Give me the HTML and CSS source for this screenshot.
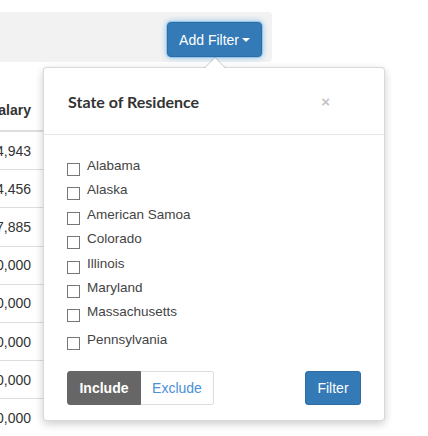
FILE: index.html
```html
<!DOCTYPE html>
<html>
<head>
<meta charset="utf-8">
<link rel="stylesheet" href="styles.css">
</head>
<body>
<div class="toolbar">
  <button class="add-btn">Add Filter<span class="caret"></span></button>
</div>
<div class="table">
  <div class="row head"><div class="cell">Salary</div></div>
  <div class="row"><div class="cell">$84,943</div></div>
  <div class="row"><div class="cell">$74,456</div></div>
  <div class="row"><div class="cell">$67,885</div></div>
  <div class="row"><div class="cell">$60,000</div></div>
  <div class="row"><div class="cell">$60,000</div></div>
  <div class="row"><div class="cell">$50,000</div></div>
  <div class="row"><div class="cell">$50,000</div></div>
  <div class="row"><div class="cell">$50,000</div></div>
</div>
<div class="popover">
  <div class="arrow"></div>
  <div class="pop-head">
    <span class="pop-title">State of Residence</span>
    <span class="close">×</span>
  </div>
  <div class="pop-body">
    <label class="item"><span class="box"></span><span>Alabama</span></label>
    <label class="item"><span class="box"></span><span>Alaska</span></label>
    <label class="item"><span class="box"></span><span>American Samoa</span></label>
    <label class="item"><span class="box"></span><span>Colorado</span></label>
    <label class="item"><span class="box"></span><span>Illinois</span></label>
    <label class="item"><span class="box"></span><span>Maryland</span></label>
    <label class="item"><span class="box"></span><span>Massachusetts</span></label>
    <label class="item last"><span class="box"></span><span>Pennsylvania</span></label>
  </div>
  <div class="pop-foot">
    <div class="seg">
      <button class="seg-btn active">Include</button>
      <button class="seg-btn">Exclude</button>
    </div>
    <button class="filter-btn">Filter</button>
  </div>
</div>
</body>
</html>
```
FILE: styles.css
```css
html, body {
  margin: 0;
  padding: 0;
}
body {
  position: relative;
  width: 428px;
  height: 436px;
  overflow: hidden;
  background: #fff;
  font-family: "Liberation Sans", Arial, sans-serif;
  color: #333;
}
button {
  font-family: "Liberation Sans", Arial, sans-serif;
  cursor: pointer;
}
.toolbar {
  margin-top: 12px;
  width: 272px;
  height: 50px;
  box-sizing: border-box;
  background: #f2f2f2;
  border-radius: 0 4px 4px 0;
  display: flex;
  justify-content: flex-end;
  align-items: flex-start;
  padding: 10px 10px 0 0;
}
.add-btn {
  height: 35px;
  box-sizing: border-box;
  padding: 0 11px;
  margin: 0;
  background: #337ab7;
  border: 1px solid #2e6da4;
  border-radius: 4px;
  color: #fff;
  font-size: 14px;
  display: flex;
  align-items: center;
  gap: 3px;
  box-shadow: 0 0 0 1px rgba(102, 175, 233, 0.45), 0 0 6px rgba(102, 175, 233, 0.9);
}
.caret {
  width: 0;
  height: 0;
  border-top: 4px solid #fff;
  border-left: 4px solid transparent;
  border-right: 4px solid transparent;
}
.table {
  margin-top: 28px;
  width: 200px;
  font-size: 14px;
}
.row {
  height: 37.2px;
  border-bottom: 1px solid #ddd;
  display: flex;
  align-items: center;
}
.row.head {
  height: 40px;
  border-bottom: 2px solid #ddd;
  font-weight: bold;
}
.cell {
  width: 31px;
  display: flex;
  justify-content: flex-end;
  white-space: nowrap;
}
.popover {
  position: absolute;
  left: 43px;
  top: 67px;
  width: 342px;
  box-sizing: border-box;
  background: #fff;
  border: 1px solid rgba(0, 0, 0, 0.15);
  border-radius: 4px;
  box-shadow: 0 3px 8px rgba(0, 0, 0, 0.2);
}
.arrow {
  position: absolute;
  top: -11px;
  left: 160px;
  width: 0;
  height: 0;
  border-left: 11px solid transparent;
  border-right: 11px solid transparent;
  border-bottom: 11px solid rgba(0, 0, 0, 0.2);
}
.arrow::after {
  content: "";
  position: absolute;
  left: -10px;
  top: 1px;
  width: 0;
  height: 0;
  border-left: 10px solid transparent;
  border-right: 10px solid transparent;
  border-bottom: 10px solid #fff;
}
.pop-head {
  height: 66px;
  border-bottom: 1px solid #e5e5e5;
  display: flex;
  align-items: center;
  justify-content: space-between;
  padding: 0 54px 0 24px;
}
.pop-title {
  font-family: Lato, "Liberation Sans", sans-serif;
  font-weight: 700;
  font-size: 16px;
  color: #333;
}
.close {
  font-family: "Liberation Sans", Arial, sans-serif;
  font-weight: bold;
  font-size: 15px;
  color: #c4c4c4;
}
.pop-body {
  padding: 19px 23px 0 23px;
  display: flex;
  flex-direction: column;
}
.item {
  height: 24.4px;
  line-height: 24.4px;
  display: flex;
  align-items: flex-start;
  gap: 7px;
  font-size: 13.5px;
  color: #444;
}
.item.last {
  margin-top: 3px;
}
.box {
  width: 13px;
  height: 13px;
  box-sizing: border-box;
  border: 1px solid #777;
  background: #fff;
  margin-top: 9px;
}
.pop-foot {
  display: flex;
  justify-content: space-between;
  align-items: center;
  padding: 19px 23px 15px 23px;
}
.seg {
  display: flex;
}
.seg-btn {
  height: 34px;
  width: 73px;
  margin: 0;
  padding: 0;
  font-size: 14px;
  background: #fff;
  color: #4a90d9;
  border: 1px solid #ddd;
  border-left: none;
  border-radius: 0 3px 3px 0;
}
.seg-btn.active {
  width: 74px;
  background: #666;
  color: #fff;
  font-weight: bold;
  border: 1px solid #666;
  border-radius: 3px 0 0 3px;
}
.filter-btn {
  height: 34px;
  width: 56px;
  margin: 0;
  padding: 0;
  font-size: 14px;
  background: #337ab7;
  color: #fff;
  border: 1px solid #2e6da4;
  border-radius: 3px;
}
```
